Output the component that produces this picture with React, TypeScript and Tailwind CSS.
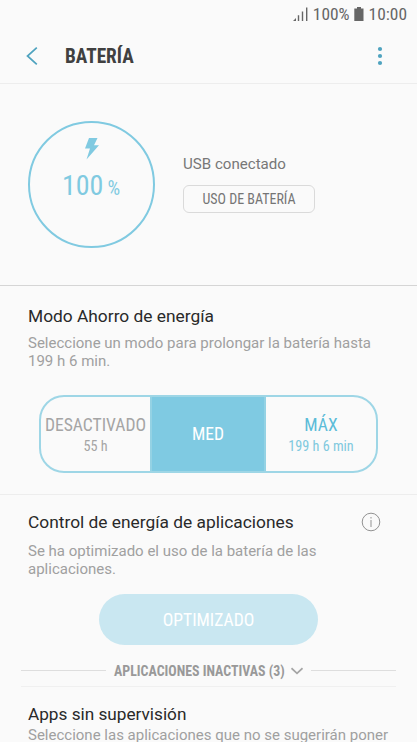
import React from 'react'

interface ModeProps {
	label: string
	detail?: string
	className: string
	labelClassName?: string
	detailClassName?: string
}

const condensed = "font-['Roboto_Condensed',Roboto,sans-serif] [font-stretch:75%]"

function StatusBar() {
	return (
		<div
			className={`${condensed} flex h-7 items-center justify-end pr-[10px] text-[17.4px] leading-7 text-[#666]`}
		>
			<svg width="15" height="14" viewBox="0 0 15 14" fill="currentColor">
				<path d="M0 14l3-3v3zM4.8 8.3h1.4V14H4.8zM8.8 4.6h1.4V14H8.8zM13 .5h1.4V14H13z" />
			</svg>
			<span className="ml-[5px]">100%</span>
			<svg
				className="ml-1"
				width="10"
				height="14"
				viewBox="0 0 10 14"
				fill="currentColor"
			>
				<path d="M3 0h4v1.4h2.5V14H.3V1.4H3z" />
			</svg>
			<span className="ml-[5px]">10:00</span>
		</div>
	)
}

function Header() {
	return (
		<header className="flex h-14 items-center border-b border-[#ededed] pr-[34px] pl-[26px]">
			<svg
				width="12"
				height="18"
				viewBox="0 0 12 18"
				fill="none"
				stroke="#4fa3bf"
				strokeWidth="1.7"
			>
				<path d="M10.8 .7L1.5 9l9.3 8.3" />
			</svg>
			<h1
				className={`${condensed} ml-[27px] pt-[3px] text-[19.3px] leading-7 font-bold text-[#404040]`}
			>
				BATERÍA
			</h1>
			<svg
				className="ml-auto"
				width="6"
				height="20"
				viewBox="0 0 6 20"
				fill="#4fa3bf"
			>
				<circle cx="3" cy="3" r="2.1" />
				<circle cx="3" cy="10" r="2.1" />
				<circle cx="3" cy="17" r="2.1" />
			</svg>
		</header>
	)
}

function BatteryStatus() {
	return (
		<section className="flex h-[202px] items-center border-b border-[#d5d5d5] pl-7">
			<div className="flex size-[127px] flex-col items-center rounded-full border-2 border-[#80cae1] pt-[15px] text-[#80cae1]">
				<svg width="14" height="22" viewBox="0 0 14 22" fill="currentColor">
					<path d="M4 0h8.5L9 7.3h5L1.5 21.5 5 10.5H0z" />
				</svg>
				<div
					className={`${condensed} mt-[10px] mr-px flex items-baseline leading-8`}
				>
					<span className="text-[28px]">100</span>
					<span className="ml-1 text-[20px]">%</span>
				</div>
			</div>
			<div className="ml-7">
				<p className="text-[15.1px] leading-5 text-[#777]">USB conectado</p>
				<button
					className={`${condensed} mt-[11px] mb-[2px] block h-7 w-[132px] rounded-md border border-[#dadada] pt-px text-[14px] text-[#757575]`}
				>
					USO DE BATERÍA
				</button>
			</div>
		</section>
	)
}

function Mode({
	label,
	detail,
	className,
	labelClassName = '',
	detailClassName = '',
}: ModeProps) {
	return (
		<button
			className={`${condensed} flex flex-col items-center justify-center whitespace-nowrap ${className}`}
		>
			<span className={`text-[17.6px] leading-[22px] ${labelClassName}`}>
				{label}
			</span>
			{detail && (
				<span className={`text-[14.2px] leading-[20px] ${detailClassName}`}>
					{detail}
				</span>
			)}
		</button>
	)
}

function PowerSaving() {
	return (
		<section className="h-[209px] border-b border-[#ededed] pt-[19px] pl-7">
			<h2 className="text-[17.35px] leading-[22px] text-[#292929]">
				Modo Ahorro de energía
			</h2>
			<p className="mt-2 text-[15px] leading-[17.5px] text-[#a0a0a0]">
				Seleccione un modo para prolongar la batería hasta
				<br />
				199 h 6 min.
			</p>
			<div className="mt-[25px] ml-[11px] flex h-[78px] w-[339px] overflow-hidden rounded-[25px] border-2 border-[#9ed6e6]">
				<Mode
					label="DESACTIVADO"
					detail="55 h"
					className="w-[109px] pt-px text-[#a5a5a5]"
				/>
				<Mode
					label="MED"
					className="w-[116px] border-x-2 border-[#94d2e4] bg-[#7fcae2] text-white"
				/>
				<Mode
					label="MÁX"
					detail="199 h 6 min"
					className="flex-1 pt-px text-[#5cbcd8]"
					detailClassName="text-[#80c9de]"
				/>
			</div>
		</section>
	)
}

function AppPower() {
	return (
		<section className="pt-[15px]">
			<div className="flex items-center pr-9 pl-7">
				<h2 className="text-[17.35px] leading-[24px] text-[#292929]">
					Control de energía de aplicaciones
				</h2>
				<svg
					className="ml-auto"
					width="20"
					height="20"
					viewBox="0 0 20 20"
					fill="none"
					stroke="#929292"
				>
					<circle cx="10" cy="10" r="8.8" />
					<path d="M10 8v7M10 5v1.5" />
				</svg>
			</div>
			<p className="mt-[9px] pl-7 text-[15px] leading-[17.5px] text-[#a0a0a0]">
				Se ha optimizado el uso de la batería de las
				<br />
				aplicaciones.
			</p>
			<button
				className={`${condensed} mt-4 ml-[99px] block h-[51px] w-[219px] rounded-full bg-[#c9e7f1] pt-[2px] text-[17.6px] text-white`}
			>
				OPTIMIZADO
			</button>
			<div className="mx-[21px] flex h-[42px] items-center border-b border-[#f0f0f0] pt-[10px]">
				<div className="h-px w-[85px] bg-[#dedede]" />
				<span
					className={`${condensed} ml-2 pt-px text-[13.9px] font-bold text-[#999]`}
				>
					APLICACIONES INACTIVAS (3)
				</span>
				<svg
					className="ml-[6px]"
					width="12"
					height="8"
					viewBox="0 0 12 8"
					fill="none"
					stroke="#a5a5a5"
					strokeWidth="1.7"
				>
					<path d="M.5 1.2L6 6.3l5.5-5.1" />
				</svg>
				<div className="ml-auto h-px w-[85px] bg-[#dedede]" />
			</div>
		</section>
	)
}

function UnmonitoredApps() {
	return (
		<section className="pt-4 pl-7">
			<h2 className="text-[17.2px] leading-[22px] text-[#292929]">
				Apps sin supervisión
			</h2>
			<p className="mt-[2px] text-[15px] leading-[17px] whitespace-nowrap text-[#a0a0a0]">
				Seleccione las aplicaciones que no se sugerirán poner
			</p>
		</section>
	)
}

export default function App() {
	return (
		<main className="h-[742px] w-[417px] overflow-hidden bg-[#fafafa] font-[Roboto,sans-serif]">
			<StatusBar />
			<Header />
			<BatteryStatus />
			<PowerSaving />
			<AppPower />
			<UnmonitoredApps />
		</main>
	)
}
